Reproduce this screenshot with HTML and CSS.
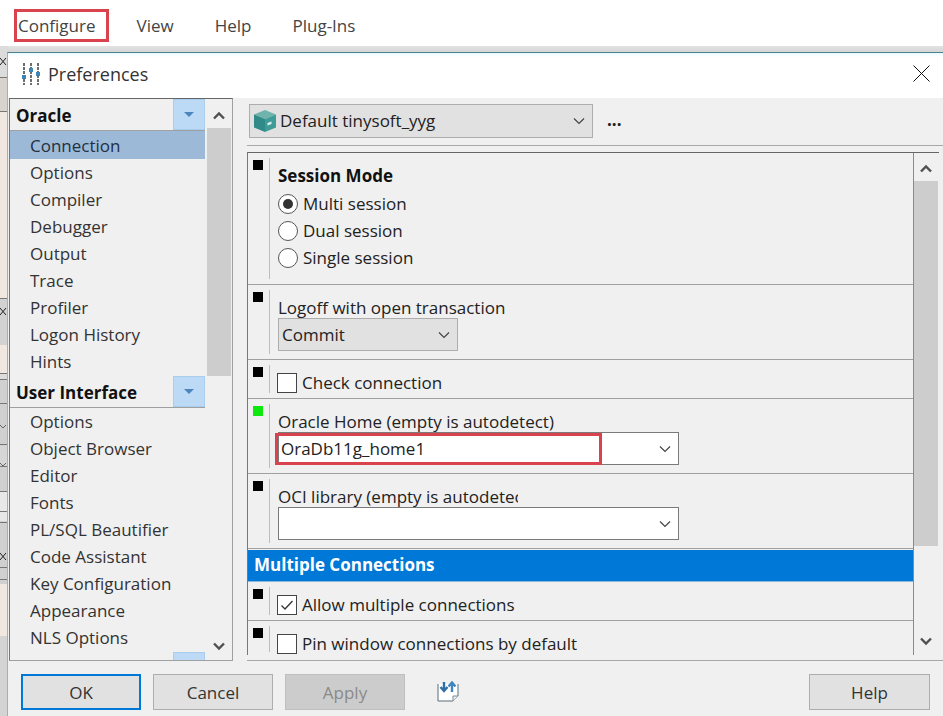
FILE: index.html
```html
<!DOCTYPE html>
<html lang="en">
<head>
<meta charset="utf-8">
<title>Preferences</title>
<link rel="stylesheet" href="styles.css">
</head>
<body>
<header class="menubar">
  <span class="menu-item menu-item--marked">Configure<i class="annot annot--menu"></i></span>
  <span class="menu-item">View</span>
  <span class="menu-item">Help</span>
  <span class="menu-item">Plug-Ins</span>
</header>
<div class="desk">
  <svg class="backdrop" width="7" height="670" viewBox="0 0 7 670">
    <rect width="7" height="670" fill="#f1e7e1"/>
    <rect y="0" width="7" height="6" fill="#dcdcdc"/>
    <rect y="6" width="7" height="25" fill="#dcdcdc"/>
    <rect y="31" width="7" height="34" fill="#d8d3cd"/>
    <rect y="252" width="7" height="47" fill="#d2d2d2"/>
    <rect y="327" width="7" height="6" fill="#dcdcdc"/>
    <rect y="333" width="7" height="205" fill="#d0d0d0"/>
    <rect y="400" width="7" height="20" fill="#d6d6d6"/>
    <rect y="445" width="7" height="30" fill="#e8e8e8"/>
    <rect y="590" width="7" height="80" fill="#d4d4d4"/>
    <path d="M0 31.500h7M0 65.500h7M0 252.500h7M0 327.500h7M0 333.500h7M0 357.500h7M0 398.500h7M0 420.500h7M0 445.500h7M0 465.500h7M0 476.500h7M0 521.500h7M0 533.500h7" stroke="#777" fill="none"/>
    <path d="M0 12l6 7M6 12l-6 7M0 262l6 7M6 262l-6 7M0 507l6 7M6 507l-6 7" stroke="#222" fill="none"/>
    <path d="M0 379l3 3 3-3M0 417l3 3 3-3" stroke="#666" fill="none"/>
  </svg>
  <section class="dialog">
    <div class="titlebar">
      <svg class="title-icon" width="20" height="24" viewBox="0 0 20 24">
        <path d="M3 1v22M10 1v22M17 1v22" stroke="#6d6d6d" stroke-width="2" stroke-dasharray="3 1" fill="none"/>
        <rect x="1" y="13" width="4" height="4" fill="#3f86b8"/>
        <rect x="8" y="6" width="4" height="4" fill="#3f86b8"/>
        <rect x="15" y="10" width="4" height="4" fill="#3f86b8"/>
      </svg>
      <span class="title-text">Preferences</span>
      <svg class="close" width="17" height="17" viewBox="0 0 17 17"><path d="M.5.5l16 16M16.5.5l-16 16" stroke="#111" stroke-width="1" fill="none"/></svg>
    </div>
    <div class="main">
      <nav class="nav">
        <div class="nav-list">
          <div class="nav-head"><b>Oracle</b><span class="nav-toggle"><i></i></span></div>
          <div class="nav-item nav-item--active">Connection</div>
          <div class="nav-item">Options</div>
          <div class="nav-item">Compiler</div>
          <div class="nav-item">Debugger</div>
          <div class="nav-item">Output</div>
          <div class="nav-item">Trace</div>
          <div class="nav-item">Profiler</div>
          <div class="nav-item">Logon History</div>
          <div class="nav-item nav-item--last">Hints</div>
          <div class="nav-head"><b>User Interface</b><span class="nav-toggle"><i></i></span></div>
          <div class="nav-item">Options</div>
          <div class="nav-item">Object Browser</div>
          <div class="nav-item">Editor</div>
          <div class="nav-item">Fonts</div>
          <div class="nav-item">PL/SQL Beautifier</div>
          <div class="nav-item">Code Assistant</div>
          <div class="nav-item">Key Configuration</div>
          <div class="nav-item">Appearance</div>
          <div class="nav-item nav-item--last">NLS Options</div>
          <div class="nav-head"><b></b><span class="nav-toggle"></span></div>
        </div>
        <div class="scrollbar scrollbar--nav">
          <svg class="arrow" width="14" height="9" viewBox="0 0 14 9"><path d="M2 7.500l5-5 5 5" stroke="#505050" stroke-width="2.400" fill="none"/></svg>
          <div class="thumb"></div>
          <svg class="arrow arrow--end" width="14" height="9" viewBox="0 0 14 9"><path d="M2 1.500l5 5 5-5" stroke="#505050" stroke-width="2.400" fill="none"/></svg>
        </div>
      </nav>
      <div class="content">
        <div class="toolbar">
          <div class="combo combo--profile">
            <svg class="box-icon" width="24" height="24" viewBox="0 0 24 24">
              <path d="M12 1L23 5.500 12 10 1 5.500z" fill="#6fb3ad"/>
              <path d="M1 5.500L12 10v13L1 18.500z" fill="#2f8a88"/>
              <path d="M23 5.500L12 10v13l11-4.500z" fill="#3f9c99"/>
              <path d="M14.500 14l4-1.600v2.500l-4 1.600z" fill="#dff0ee"/>
            </svg>
            <span class="combo-text">Default tinysoft_yyg</span>
            <svg class="chev" width="12" height="8" viewBox="0 0 12 8"><path d="M1 1.500l5 5 5-5" stroke="#444" stroke-width="1.200" fill="none"/></svg>
          </div>
          <span class="dots">...</span>
        </div>
        <div class="panel">
          <div class="rows">
            <div class="row row--session">
              <span class="mark"></span>
              <div class="field">
                <div class="field-title">Session Mode</div>
                <label class="radio"><span class="radio-dot radio-dot--on"></span>Multi session</label>
                <label class="radio"><span class="radio-dot"></span>Dual session</label>
                <label class="radio"><span class="radio-dot"></span>Single session</label>
              </div>
            </div>
            <div class="row row--logoff">
              <span class="mark"></span>
              <div class="field">
                <div class="field-label">Logoff with open transaction</div>
                <div class="combo combo--commit">
                  <span class="combo-text">Commit</span>
                  <svg class="chev" width="12" height="8" viewBox="0 0 12 8"><path d="M1 1.500l5 5 5-5" stroke="#444" stroke-width="1.200" fill="none"/></svg>
                </div>
              </div>
            </div>
            <div class="row row--check">
              <span class="mark"></span>
              <div class="field field--check">
                <label class="check"><span class="check-box"></span>Check connection</label>
              </div>
            </div>
            <div class="row row--home">
              <span class="mark mark--green"></span>
              <div class="field">
                <div class="field-label">Oracle Home (empty is autodetect)</div>
                <div class="combo combo--white">
                  <span class="combo-text">OraDb11g_home1</span>
                  <svg class="chev" width="12" height="8" viewBox="0 0 12 8"><path d="M1 1.500l5 5 5-5" stroke="#444" stroke-width="1.200" fill="none"/></svg>
                  <i class="annot annot--home"></i>
                </div>
              </div>
            </div>
            <div class="row row--home">
              <span class="mark"></span>
              <div class="field">
                <div class="field-label field-label--clip">OCI library (empty is autodetect)</div>
                <div class="combo combo--white">
                  <span class="combo-text"></span>
                  <svg class="chev" width="12" height="8" viewBox="0 0 12 8"><path d="M1 1.500l5 5 5-5" stroke="#444" stroke-width="1.200" fill="none"/></svg>
                </div>
              </div>
            </div>
            <div class="section-head">Multiple Connections</div>
            <div class="row row--check">
              <span class="mark"></span>
              <div class="field field--check">
                <label class="check"><span class="check-box">
                  <svg width="16" height="16" viewBox="0 0 16 16"><path d="M2.500 8.500l3.500 3.500 7.500-8" stroke="#333" stroke-width="1.300" fill="none"/></svg>
                </span>Allow multiple connections</label>
              </div>
            </div>
            <div class="row row--check row--last">
              <span class="mark"></span>
              <div class="field field--check">
                <label class="check"><span class="check-box"></span>Pin window connections by default</label>
              </div>
            </div>
          </div>
          <div class="scrollbar scrollbar--panel">
            <svg class="arrow" width="14" height="9" viewBox="0 0 14 9"><path d="M2 7.500l5-5 5 5" stroke="#505050" stroke-width="2.400" fill="none"/></svg>
            <div class="thumb"></div>
            <svg class="arrow arrow--end" width="14" height="9" viewBox="0 0 14 9"><path d="M2 1.500l5 5 5-5" stroke="#505050" stroke-width="2.400" fill="none"/></svg>
          </div>
        </div>
      </div>
    </div>
    <footer class="footer">
      <button class="btn btn--default">OK</button>
      <button class="btn">Cancel</button>
      <button class="btn btn--disabled">Apply</button>
      <svg class="save-icon" width="22" height="22" viewBox="0 0 22 22">
        <path d="M1 3v17h15l5-5V3" stroke="#5b6b7a" stroke-width="1" fill="#fff"/>
        <path d="M16 20v-5h5" stroke="#7d8a96" stroke-width="1" fill="#eef1f4"/>
        <path d="M7 1v8M3.500 6L7 10l3.500-4" stroke="#2f6fa6" stroke-width="2.400" fill="none"/>
        <path d="M15 11V2M11.500 5.500L15 1.500l3.500 4" stroke="#3f86c0" stroke-width="2.400" fill="none"/>
      </svg>
      <button class="btn btn--help">Help</button>
    </footer>
  </section>
</div>
</body>
</html>
```
FILE: styles.css
```css
* { box-sizing: border-box; }
html, body { margin: 0; height: 100%; }
body {
  width: 943px;
  height: 716px;
  overflow: hidden;
  background: #fff;
  color: #222;
  font-family: "Open Sans", "Noto Sans", sans-serif;
  font-size: 17px;
  line-height: 24px;
}
.menubar {
  height: 46px;
  padding: 14px 0 0 18px;
  display: flex;
  gap: 41px;
  background: #fff;
  color: #444;
}
.menu-item { position: relative; }
.annot { position: absolute; border: 3px solid #d8434e; pointer-events: none; }
.annot--menu { left: -4px; top: -5px; width: 95px; height: 33px; }
.annot--home { left: -4px; top: 0; width: 327px; height: 32px; }
.desk {
  position: relative;
  height: 670px;
  background: linear-gradient(#e2e2e2, #d6d6d6 6px);
  padding: 6px 0 0 7px;
}
.backdrop { position: absolute; left: 0; top: 0; }
.dialog {
  position: relative;
  height: 664px;
  display: flex;
  flex-direction: column;
  background: #f0f0f0;
  border-top: 1px solid #4f8290;
  border-left: 1px solid #8fb2d6;
}
.titlebar {
  height: 45px;
  flex: none;
  display: flex;
  align-items: center;
  padding: 0 13px 4px 13px;
  background: linear-gradient(#e8fafb, #fff 4px);
}
.title-icon { flex: none; }
.title-text { margin-left: 7px; font-size: 18px; color: #333; }
.close { margin-left: auto; }
.main { flex: none; height: 563px; display: flex; gap: 14px; padding-left: 1px; }
.nav {
  width: 224px;
  flex: none;
  display: flex;
  border: 1px solid #a0a0a0;
  border-top-color: #666;
  border-left-color: #777;
  overflow: hidden;
}
.nav-list { width: 195px; flex: none; background: #f0f0f0; }
.nav-head {
  height: 32px;
  padding-left: 6px;
  display: flex;
  align-items: center;
  justify-content: space-between;
  border-bottom: 1px solid #a0a0a0;
  color: #111;
}
.nav-head b { font-weight: 700; font-size: 17px; padding-top: 3px; }
.nav-toggle {
  width: 32px;
  height: 31px;
  background: #bcdaf6;
  border: 1px solid #a9cdec;
  display: flex;
  align-items: center;
  justify-content: center;
}
.nav-toggle i {
  width: 0;
  height: 0;
  border-left: 5px solid transparent;
  border-right: 5px solid transparent;
  border-top: 5px solid #4c86bd;
}
.nav-item { height: 27px; padding-left: 20px; line-height: 28px; color: #333; }
.nav-item--active { height: 28px; line-height: 29px; background: #9db9d8; color: #22303f; }
.nav-item--last { height: 28px; }
.scrollbar {
  position: relative;
  flex: none;
  display: flex;
  flex-direction: column;
  align-items: center;
  background: #f0f0f0;
}
.scrollbar--nav { width: 27px; padding-top: 12px; }
.scrollbar--panel { width: 25px; padding-top: 11px; border-left: 1px solid #8a8a8a; }
.thumb { width: 24px; margin-top: 8px; background: #cdcdcd; }
.scrollbar--nav .thumb { height: 248px; }
.scrollbar--panel .thumb { height: 365px; }
.arrow { flex: none; }
.arrow--end { margin-top: auto; margin-bottom: 9px; }
.content {
  flex: none;
  width: 697px;
  display: flex;
  flex-direction: column;
  border-bottom: 1px solid #a8a8a8;
}
.toolbar {
  height: 54px;
  flex: none;
  padding: 6px 0 0 2px;
  display: flex;
  align-items: flex-start;
  position: relative;
}
.toolbar::after {
  content: "";
  position: absolute;
  left: 0;
  right: 0;
  top: 47px;
  border-top: 1px solid #a8a8a8;
}
.combo {
  position: relative;
  display: flex;
  align-items: center;
  height: 33px;
  border: 1px solid #adadad;
  background: #e1e1e1;
}
.combo-text { flex: 1; padding-left: 3px; color: #222; }
.chev { flex: none; margin-right: 7px; }
.combo--profile { width: 344px; height: 34px; padding-left: 3px; }
.box-icon { flex: none; }
.combo--profile .combo-text { padding-left: 3px; }
.combo--commit { width: 180px; }
.combo--white { width: 401px; background: #fff; border-color: #7a7a7a; }
.combo--white .combo-text { padding-left: 2px; }
.dots { margin-left: 14px; margin-top: 6px; font-weight: 700; color: #222; line-height: 20px; }
.panel {
  flex: none;
  display: flex;
  border-top: 1px solid #666;
  border-left: 1px solid #777;
  height: 503px;
  overflow: hidden;
  margin-right: 5px;
}
.rows { width: 665px; flex: none; }
.row {
  display: flex;
  border-bottom: 1px solid #a0a0a0;
  padding: 5px 0 5px 5px;
}
.row--session { height: 132px; }
.row--logoff { height: 75px; }
.row--check { height: 39px; }
.row--home { height: 75px; }
.row--last { border-bottom: 0; height: 36px; }
.mark { flex: none; width: 10px; height: 10px; margin-top: 2px; background: #000; }
.mark--green { background: #0fe80f; }
.field {
  flex: 1;
  margin-left: 6px;
  padding-left: 8px;
  border-left: 1px solid #bdbdbd;
  position: relative;
}
.field-title { font-weight: 700; color: #111; height: 31px; padding-top: 6px; line-height: 24px; margin-bottom: 1px; }
.field-label { height: 23px; padding-top: 6px; line-height: 24px; margin-bottom: 5px; }
.field-label--clip {
  width: 240px;
  height: 25px;
  margin-top: 6px;
  margin-bottom: -3px;
  padding-top: 0;
  overflow: hidden;
  white-space: nowrap;
}
.field--check { padding-top: 8px; }
.radio, .check { display: flex; align-items: center; gap: 5px; height: 27px; }
.check { margin-left: -1px; height: 20px; }
.radio-dot {
  flex: none;
  width: 20px;
  height: 20px;
  border: 1px solid #555;
  border-radius: 50%;
  background: #fff;
  display: flex;
  align-items: center;
  justify-content: center;
}
.radio-dot--on::before {
  content: "";
  width: 10px;
  height: 10px;
  border-radius: 50%;
  background: #333;
}
.check-box {
  flex: none;
  width: 20px;
  height: 20px;
  border: 1px solid #444;
  background: #fff;
  display: flex;
  align-items: center;
  justify-content: center;
}
.section-head {
  height: 32px;
  margin-top: 1px;
  padding-left: 6px;
  background: #0078d7;
  color: #fff;
  font-weight: 700;
  line-height: 30px;
  border-bottom: 1px solid #8bb7dc;
}
.footer {
  flex: 1;
  display: flex;
  align-items: flex-start;
  gap: 12px;
  padding: 13px 13px 0 13px;
  background: #f0f0f0;
}
.btn {
  width: 120px;
  height: 36px;
  flex: none;
  border: 1px solid #adadad;
  background: #e1e1e1;
  color: #333;
  font: inherit;
  padding: 1px 0 0;
}
.btn--default { border: 2px solid #0078d7; }
.btn--disabled { background: #cccccc; border-color: #bfbfbf; color: #8a8a8a; }
.btn--help { margin-left: auto; width: 121px; }
.save-icon { flex: none; margin: 7px 0 0 20px; }
```
